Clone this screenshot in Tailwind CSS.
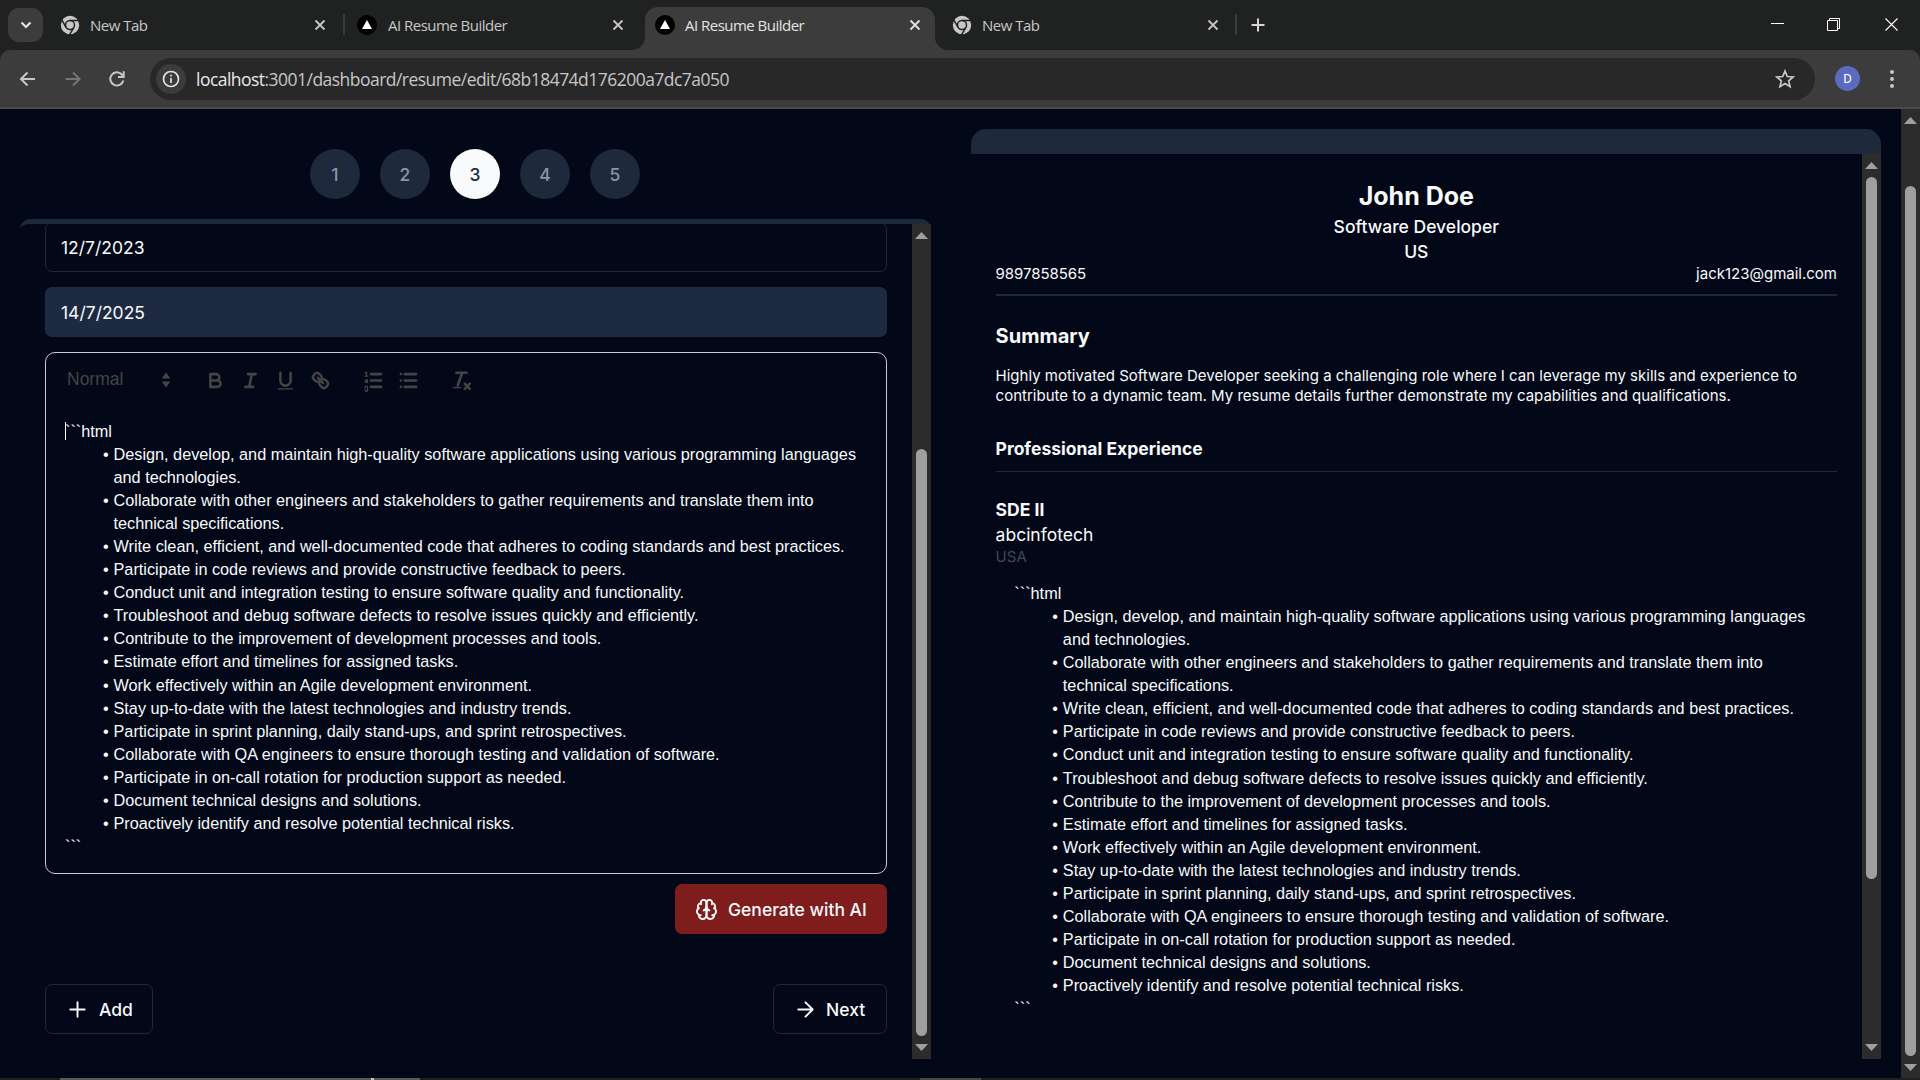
<!DOCTYPE html>
<html lang="en">
<head>
<meta charset="utf-8">
<title>AI Resume Builder</title>
<script src="https://cdn.jsdelivr.net/npm/@tailwindcss/browser@4"></script>
</head>
<body class="w-[1920px] h-[1080px] overflow-hidden bg-[#020817] font-[Inter,sans-serif] text-[#f8fafc] flex flex-col">

<svg class="hidden">
  <symbol id="x" viewBox="0 0 12 12"><path d="M1.5 1.5l9 9M10.5 1.5l-9 9" stroke="currentColor" stroke-width="1.8" fill="none"/></symbol>
  <symbol id="chrome" viewBox="-10 -10 20 20">
    <circle r="9.2" fill="#c7c7c7"/>
    <g stroke="#202221" stroke-width="1.5" fill="none"><circle r="4.5"/><path d="M0-4.5H9.5"/><path d="M0-4.5H9.5" transform="rotate(120)"/><path d="M0-4.5H9.5" transform="rotate(240)"/></g>
  </symbol>
  <symbol id="tri" viewBox="0 0 20 20"><circle cx="10" cy="10" r="10" fill="#000"/><path d="M10 5l5 9H5z" fill="#fff"/></symbol>
  <symbol id="up" viewBox="0 0 13 7"><path d="M6.5 0L13 7H0z" fill="#9f9f9f"/></symbol>
  <symbol id="down" viewBox="0 0 13 7"><path d="M6.5 7L13 0H0z" fill="#9f9f9f"/></symbol>
</svg>

<!-- Tab strip -->
<div class="h-[50px] shrink-0 bg-[#202221] flex items-start pl-2 font-['Open_Sans',sans-serif] text-[15px] tracking-[-0.52px] text-[#c7c7c7]">
  <div class="mt-2 w-[35px] h-[34px] rounded-[11px] bg-[#3c3c3c] flex items-center justify-center">
    <svg class="w-3 h-3" viewBox="0 0 12 12"><path d="M1.5 3.5L6 8l4.5-4.5" stroke="#e3e3e3" stroke-width="2.2" fill="none"/></svg>
  </div>
  <div class="w-[302px] h-[50px] flex items-center pl-[17px]">
    <svg class="w-5 h-5"><use href="#chrome"/></svg>
    <span class="ml-[10px] w-[224px]">New Tab</span>
    <svg class="w-3 h-3"><use href="#x"/></svg>
  </div>
  <div class="mt-[14px] w-0.5 h-[21px] -ml-0.5 bg-[#3c3c3c] rounded"></div>
  <div class="w-[300px] h-[50px] flex items-center pl-[12px]">
    <svg class="w-5 h-5"><use href="#tri"/></svg>
    <span class="ml-[11px] w-[224px]">AI Resume Builder</span>
    <svg class="w-3 h-3"><use href="#x"/></svg>
  </div>
  <div class="relative mt-[7px] w-[290px] h-[43px] bg-[#3c3c3c] rounded-t-[13px] flex items-center pl-[10px] pb-[7px] text-[#e3e3e3]">
    <svg class="absolute -left-[13px] bottom-0 w-[13px] h-[13px]" viewBox="0 0 13 13"><path d="M13 0v13H0A13 13 0 0 0 13 0z" fill="#3c3c3c"/></svg>
    <svg class="absolute -right-[13px] bottom-0 w-[13px] h-[13px]" viewBox="0 0 13 13"><path d="M0 0v13h13A13 13 0 0 1 0 0z" fill="#3c3c3c"/></svg>
    <svg class="w-5 h-5"><use href="#tri"/></svg>
    <span class="ml-[10px] w-[224px]">AI Resume Builder</span>
    <svg class="w-3 h-3"><use href="#x"/></svg>
  </div>
  <div class="w-[300px] h-[50px] flex items-center pl-[17px]">
    <svg class="w-5 h-5"><use href="#chrome"/></svg>
    <span class="ml-[10px] w-[225px]">New Tab</span>
    <svg class="w-3 h-3"><use href="#x"/></svg>
  </div>
  <div class="mt-[14px] w-0.5 h-[21px] bg-[#3c3c3c] rounded"></div>
  <svg class="mt-[18px] ml-[14px] w-[14px] h-[14px]" viewBox="0 0 14 14"><path d="M7 .5v13M.5 7h13" stroke="#d6d6d6" stroke-width="2"/></svg>
  <div class="ml-auto mr-[22px] mt-[18px] flex text-white">
    <svg class="w-[13px] h-[13px]" viewBox="0 0 13 13"><path d="M0 5.5h13" stroke="#fff"/></svg>
    <svg class="ml-[43px] w-[13px] h-[13px]" viewBox="0 0 13 13"><path d="M.5 2.5h10v10H.5zM2.5 2V.5h10v10H11" fill="none" stroke="#fff"/></svg>
    <svg class="ml-[45px] w-[13px] h-[13px]" viewBox="0 0 13 13"><path d="M.5.5l12 12M12.5.5l-12 12" stroke="#fff" stroke-width="1.1"/></svg>
  </div>
</div>

<!-- Toolbar -->
<div class="h-[59px] shrink-0 bg-[#202221]">
  <div class="h-[59px] bg-[#3c3c3c] rounded-t-[10px] border-b-2 border-[#4a4a4a] flex items-center pl-[18px]">
    <svg class="w-5 h-5" viewBox="0 0 20 20" fill="none" stroke="#c7c7c7" stroke-width="2"><path d="M17 10H3.500M9.500 3.500L3 10l6.500 6.500"/></svg>
    <svg class="ml-[25px] w-5 h-5" viewBox="0 0 20 20" fill="none" stroke="#757575" stroke-width="2"><path d="M2.500 10H16M10 3.500l6.500 6.500-6.500 6.500"/></svg>
    <svg class="ml-[24px] w-5 h-5" viewBox="0 0 20 20" fill="none" stroke="#c7c7c7" stroke-width="2"><path d="M16.300 11.500A6.600 6.600 0 1 1 14.800 5.500L16.500 7.300"/><path d="M16.700 2.300v5.700h-5.700"/></svg>
    <div class="ml-[23px] w-[1665px] h-[42px] rounded-full bg-[#282828] flex items-center pl-[6px] pr-[20px]">
      <div class="w-[30px] h-[30px] rounded-full bg-[#3c3c3c] flex items-center justify-center">
        <svg class="w-[18px] h-[18px]" viewBox="0 0 18 18"><circle cx="9" cy="9" r="7.5" fill="none" stroke="#e3e3e3" stroke-width="1.7"/><path d="M9 8v5M9 4.800v1.800" stroke="#e3e3e3" stroke-width="1.7"/></svg>
      </div>
      <span class="ml-[10px] pt-0.5 font-['Open_Sans',sans-serif] text-[17.5px] tracking-[-0.53px] text-[#c7c7c7] whitespace-nowrap"><span class="text-[#e8e8e8]">localhost</span>:3001/dashboard/resume/edit/68b18474d176200a7dc7a050</span>
      <svg class="ml-auto w-5 h-5" viewBox="0 0 20 20"><path d="M10 2l2.300 5.500 5.900.5-4.500 3.900 1.400 5.800L10 14.600l-5.100 3.100 1.400-5.800L1.800 8l5.900-.5z" fill="none" stroke="#c7c7c7" stroke-width="1.7"/></svg>
    </div>
    <div class="ml-[20px] w-[25px] h-[25px] rounded-full bg-[#5c6bc0] text-[13px] text-white flex items-center justify-center font-[Roboto,sans-serif]">D</div>
    <svg class="ml-[29px] w-[6px] h-5" viewBox="0 0 6 20" fill="#c7c7c7"><circle cx="3" cy="3" r="2"/><circle cx="3" cy="10" r="2"/><circle cx="3" cy="17" r="2"/></svg>
  </div>
</div>

<!-- Page -->
<div class="h-[969px] shrink-0 flex">
  <!-- Form column -->
  <section class="ml-5 w-[911px] pt-10">
    <div class="flex justify-center gap-5 text-[17.5px] font-medium text-[#8996a8] -ml-px">
      <div class="w-[50px] h-[50px] pt-0.5 rounded-full bg-[#1e293b] flex items-center justify-center">1</div>
      <div class="w-[50px] h-[50px] pt-0.5 rounded-full bg-[#1e293b] flex items-center justify-center">2</div>
      <div class="w-[50px] h-[50px] pt-0.5 rounded-full bg-[#f8fafc] text-[#1e293b] flex items-center justify-center">3</div>
      <div class="w-[50px] h-[50px] pt-0.5 rounded-full bg-[#1e293b] flex items-center justify-center">4</div>
      <div class="w-[50px] h-[50px] pt-0.5 rounded-full bg-[#1e293b] flex items-center justify-center">5</div>
    </div>
    <div class="mt-5 h-[840px] border-t-[5px] border-[#1e293b] rounded-t-[10px] flex">
      <div class="h-[835px] w-[892px] overflow-hidden pl-[25px] pr-[25px] flex flex-col">
        <div class="-mt-[2px] h-[50px] shrink-0 border border-[#1e293b] rounded-[7px] px-[15px] pt-0.5 flex items-center text-[17.5px]">12/7/2023</div>
        <div class="mt-[15px] h-[50px] shrink-0 rounded-[7px] bg-[#1e2a42] px-[16px] pt-0.5 flex items-center text-[17.5px]">14/7/2025</div>
        <!-- Rich text editor -->
        <div class="mt-[15px] h-[522px] shrink-0 border border-[#ccc] rounded-[10px] font-['Liberation_Sans',Arial,sans-serif]">
          <div class="h-[52px] pt-[2px] pl-[21px] flex items-center text-[#444]">
            <span class="w-[92px] text-[17.5px] font-medium -mt-px">Normal</span>
            <svg class="w-[14px] h-[22px]" viewBox="0 0 14 22" fill="#444"><path d="M7 4L10.500 9h-7zM7 18l3.500-5h-7z" stroke="#444" stroke-linejoin="round"/></svg>
            <svg class="ml-[31px] w-[23px] h-[23px]" viewBox="0 0 18 18" fill="none" stroke="#444" stroke-width="2" stroke-linecap="round" stroke-linejoin="round"><path d="M5 4h4.500A2.500 2.500 0 0 1 12 6.500 2.500 2.500 0 0 1 9.500 9H5zM5 9h5.500A2.500 2.500 0 0 1 13 11.500 2.500 2.500 0 0 1 10.500 14H5z"/></svg>
            <svg class="ml-[12px] w-[23px] h-[23px]" viewBox="0 0 18 18" fill="none" stroke="#444" stroke-width="2" stroke-linecap="round"><path d="M7 4h6M5 14h6M8 14l2-10"/></svg>
            <svg class="ml-[12px] w-[23px] h-[23px]" viewBox="0 0 18 18" fill="none" stroke="#444" stroke-width="2" stroke-linecap="round"><path d="M5 3v6a4.012 4.012 0 0 0 4 4 4.012 4.012 0 0 0 4-4V3"/><rect x="3" y="15" width="12" height="1" rx=".5" fill="#444" stroke="none"/></svg>
            <svg class="ml-[12px] w-[23px] h-[23px]" viewBox="0 0 18 18" fill="none" stroke="#444" stroke-width="2" stroke-linecap="round"><path d="M7 7l4 4M8.900 4.577a3.476 3.476 0 0 1 .36 4.679 3.476 3.476 0 0 1-4.679-.36C3.185 7.500 2.035 6.400 4.217 4.217s3.286-1.032 4.683.36zM13.423 9.100a3.476 3.476 0 0 0-4.679-.36 3.476 3.476 0 0 0 .36 4.679c1.392 1.392 2.500 2.542 4.679.36s1.032-3.286-.36-4.679z"/></svg>
            <svg class="ml-[30px] w-[23px] h-[23px]" viewBox="0 0 18 18" fill="none" stroke="#444" stroke-linecap="round"><path stroke-width="2" d="M7 4h8M7 9h8M7 14h8"/><path d="M2.500 5.500h2M3.500 5.500v-3l-1 .5M2.500 10.500h2c0-.7-1.900-.6-1.900-1.500s1.900-.9 1.900 0c0 .5-.8 1-1.500 1.300M2.500 14.700a1 1 0 1 1 1.200.8 1 1 0 1 1-1.200.8"/></svg>
            <svg class="ml-[12px] w-[23px] h-[23px]" viewBox="0 0 18 18" fill="none" stroke="#444" stroke-width="2" stroke-linecap="round"><path d="M6 4h9M6 9h9M6 14h9M3 4h0M3 9h0M3 14h0"/></svg>
            <svg class="ml-[30px] w-[23px] h-[23px]" viewBox="0 0 18 18" fill="none" stroke="#444" stroke-linecap="round"><path stroke-width="2" d="M5 3h8M6 13L9.500 3M11.500 11.500l4 4M15.500 11.500l-4 4"/><rect x="2" y="14" width="7" height="1" rx=".5" fill="#444" stroke="none"/></svg>
          </div>
          <div class="relative pt-[14.7px] pl-[19px] pr-[19px] text-[16.25px] leading-[23.075px]">
            <div class="absolute left-[19px] top-[17px] w-px h-[18px] bg-white"></div>
            <p>```html</p>
            <ul class="pl-[24px]">
              <li class="pl-[24.5px]"><span class="inline-block w-[19.5px] -ml-[24.4px] mr-[4.9px] text-right">•</span>Design, develop, and maintain high-quality software applications using various programming languages and technologies.</li>
              <li class="pl-[24.5px]"><span class="inline-block w-[19.5px] -ml-[24.4px] mr-[4.9px] text-right">•</span>Collaborate with other engineers and stakeholders to gather requirements and translate them into technical specifications.</li>
              <li class="pl-[24.5px]"><span class="inline-block w-[19.5px] -ml-[24.4px] mr-[4.9px] text-right">•</span>Write clean, efficient, and well-documented code that adheres to coding standards and best practices.</li>
              <li class="pl-[24.5px]"><span class="inline-block w-[19.5px] -ml-[24.4px] mr-[4.9px] text-right">•</span>Participate in code reviews and provide constructive feedback to peers.</li>
              <li class="pl-[24.5px]"><span class="inline-block w-[19.5px] -ml-[24.4px] mr-[4.9px] text-right">•</span>Conduct unit and integration testing to ensure software quality and functionality.</li>
              <li class="pl-[24.5px]"><span class="inline-block w-[19.5px] -ml-[24.4px] mr-[4.9px] text-right">•</span>Troubleshoot and debug software defects to resolve issues quickly and efficiently.</li>
              <li class="pl-[24.5px]"><span class="inline-block w-[19.5px] -ml-[24.4px] mr-[4.9px] text-right">•</span>Contribute to the improvement of development processes and tools.</li>
              <li class="pl-[24.5px]"><span class="inline-block w-[19.5px] -ml-[24.4px] mr-[4.9px] text-right">•</span>Estimate effort and timelines for assigned tasks.</li>
              <li class="pl-[24.5px]"><span class="inline-block w-[19.5px] -ml-[24.4px] mr-[4.9px] text-right">•</span>Work effectively within an Agile development environment.</li>
              <li class="pl-[24.5px]"><span class="inline-block w-[19.5px] -ml-[24.4px] mr-[4.9px] text-right">•</span>Stay up-to-date with the latest technologies and industry trends.</li>
              <li class="pl-[24.5px]"><span class="inline-block w-[19.5px] -ml-[24.4px] mr-[4.9px] text-right">•</span>Participate in sprint planning, daily stand-ups, and sprint retrospectives.</li>
              <li class="pl-[24.5px]"><span class="inline-block w-[19.5px] -ml-[24.4px] mr-[4.9px] text-right">•</span>Collaborate with QA engineers to ensure thorough testing and validation of software.</li>
              <li class="pl-[24.5px]"><span class="inline-block w-[19.5px] -ml-[24.4px] mr-[4.9px] text-right">•</span>Participate in on-call rotation for production support as needed.</li>
              <li class="pl-[24.5px]"><span class="inline-block w-[19.5px] -ml-[24.4px] mr-[4.9px] text-right">•</span>Document technical designs and solutions.</li>
              <li class="pl-[24.5px]"><span class="inline-block w-[19.5px] -ml-[24.4px] mr-[4.9px] text-right">•</span>Proactively identify and resolve potential technical risks.</li>
            </ul>
            <p>```</p>
          </div>
        </div>
        <button class="self-end mt-[10px] w-[212px] h-[50px] shrink-0 rounded-[7px] bg-[#7f1d1d] flex items-center pl-5 text-[17.5px] font-medium whitespace-nowrap">
          <svg class="w-[23px] h-[23px] mr-[10px]" viewBox="0 0 24 24" fill="none" stroke="currentColor" stroke-width="2" stroke-linecap="round" stroke-linejoin="round"><path d="M12 5a3 3 0 1 0-5.997.125 4 4 0 0 0-2.526 5.770 4 4 0 0 0 .556 6.588A4 4 0 1 0 12 18Z"/><path d="M12 5a3 3 0 1 1 5.997.125 4 4 0 0 1 2.526 5.770 4 4 0 0 1-.556 6.588A4 4 0 1 1 12 18Z"/><path d="M15 13a4.500 4.500 0 0 1-3-4 4.500 4.500 0 0 1-3 4M17.599 6.500a3 3 0 0 0 .399-1.375M6.003 5.125A3 3 0 0 0 6.401 6.500M3.477 10.896a4 4 0 0 1 .585-.396M19.938 10.500a4 4 0 0 1 .585.396M6 18a4 4 0 0 1-1.967-.516M19.967 17.484A4 4 0 0 1 18 18"/></svg>
          <span class="pt-0.5">Generate with AI</span>
        </button>
        <div class="mt-[50px] flex justify-between text-[17.5px] font-medium">
          <button class="w-[108px] h-[50px] rounded-[7px] border border-[#1e293b] flex items-center pl-[20px]">
            <svg class="w-[23px] h-[23px] mr-[10px]" viewBox="0 0 24 24" fill="none" stroke="currentColor" stroke-width="2" stroke-linecap="round"><path d="M4.500 12h15M12 4.500v15"/></svg><span class="pt-0.5">Add</span>
          </button>
          <button class="w-[114px] h-[50px] rounded-[7px] border border-[#1e293b] flex items-center pl-[20px]">
            <svg class="w-[23px] h-[23px] mr-[9px]" viewBox="0 0 24 24" fill="none" stroke="currentColor" stroke-width="2" stroke-linecap="round" stroke-linejoin="round"><path d="M4.500 12h15M12 4.500l7.500 7.500-7.500 7.500"/></svg><span class="pt-0.5">Next</span>
          </button>
        </div>
      </div>
      <div class="w-[19px] h-[835px] bg-[#2c2c2c] flex flex-col items-center pt-2 pb-2">
        <svg class="w-[13px] h-[7px]"><use href="#up"/></svg>
        <div class="mt-[210px] w-[11px] h-[587px] rounded-full bg-[#9f9f9f]"></div>
        <svg class="mt-auto w-[13px] h-[7px]"><use href="#down"/></svg>
      </div>
    </div>
  </section>

  <!-- Resume preview -->
  <section class="ml-10 mt-5 w-[910px] h-[930px] border-t-[25px] border-[#1e293b] rounded-t-[15px] flex">
    <div class="w-[891px] pl-[24.6px] pr-[25px] pt-[25px]">
      <h1 class="text-center text-[25px] leading-[35px] font-bold">John Doe</h1>
      <p class="text-center text-[17.5px] leading-[25px] font-medium">Software Developer</p>
      <p class="text-center text-[17.5px] leading-[25px] font-medium">US</p>
      <div class="flex justify-between text-[15px] leading-5"><span class="tracking-[-0.05px]">9897858565</span><span>jack123@gmail.com</span></div>
      <div class="mt-[10px] h-0.5 bg-[#1e293b]"></div>
      <h2 class="mt-[25px] text-[20px] leading-[30px] font-bold">Summary</h2>
      <p class="mt-[15px] text-[15px] leading-5">Highly motivated Software Developer seeking a challenging role where I can leverage my skills and experience to contribute to a dynamic team. My resume details further demonstrate my capabilities and qualifications.</p>
      <h2 class="mt-[30px] text-[17.5px] leading-[25px] font-bold">Professional Experience</h2>
      <div class="mt-[10px] h-px bg-[#1e293b]"></div>
      <h3 class="mt-[25px] text-[17.5px] leading-[25px] font-bold">SDE II</h3>
      <p class="text-[17.5px] leading-[25px]">abcinfotech</p>
      <p class="text-[15px] leading-5 text-[#404956]">USA</p>
      <div class="pt-[14.9px] pl-[18.75px] pr-[18.75px] font-['Liberation_Sans',Arial,sans-serif] text-[16.25px] leading-[23.075px]">
        <p>```html</p>
        <ul class="pl-[24px]">
          <li class="pl-[24.5px]"><span class="inline-block w-[19.5px] -ml-[24.4px] mr-[4.9px] text-right">•</span>Design, develop, and maintain high-quality software applications using various programming languages and technologies.</li>
          <li class="pl-[24.5px]"><span class="inline-block w-[19.5px] -ml-[24.4px] mr-[4.9px] text-right">•</span>Collaborate with other engineers and stakeholders to gather requirements and translate them into technical specifications.</li>
          <li class="pl-[24.5px]"><span class="inline-block w-[19.5px] -ml-[24.4px] mr-[4.9px] text-right">•</span>Write clean, efficient, and well-documented code that adheres to coding standards and best practices.</li>
          <li class="pl-[24.5px]"><span class="inline-block w-[19.5px] -ml-[24.4px] mr-[4.9px] text-right">•</span>Participate in code reviews and provide constructive feedback to peers.</li>
          <li class="pl-[24.5px]"><span class="inline-block w-[19.5px] -ml-[24.4px] mr-[4.9px] text-right">•</span>Conduct unit and integration testing to ensure software quality and functionality.</li>
          <li class="pl-[24.5px]"><span class="inline-block w-[19.5px] -ml-[24.4px] mr-[4.9px] text-right">•</span>Troubleshoot and debug software defects to resolve issues quickly and efficiently.</li>
          <li class="pl-[24.5px]"><span class="inline-block w-[19.5px] -ml-[24.4px] mr-[4.9px] text-right">•</span>Contribute to the improvement of development processes and tools.</li>
          <li class="pl-[24.5px]"><span class="inline-block w-[19.5px] -ml-[24.4px] mr-[4.9px] text-right">•</span>Estimate effort and timelines for assigned tasks.</li>
          <li class="pl-[24.5px]"><span class="inline-block w-[19.5px] -ml-[24.4px] mr-[4.9px] text-right">•</span>Work effectively within an Agile development environment.</li>
          <li class="pl-[24.5px]"><span class="inline-block w-[19.5px] -ml-[24.4px] mr-[4.9px] text-right">•</span>Stay up-to-date with the latest technologies and industry trends.</li>
          <li class="pl-[24.5px]"><span class="inline-block w-[19.5px] -ml-[24.4px] mr-[4.9px] text-right">•</span>Participate in sprint planning, daily stand-ups, and sprint retrospectives.</li>
          <li class="pl-[24.5px]"><span class="inline-block w-[19.5px] -ml-[24.4px] mr-[4.9px] text-right">•</span>Collaborate with QA engineers to ensure thorough testing and validation of software.</li>
          <li class="pl-[24.5px]"><span class="inline-block w-[19.5px] -ml-[24.4px] mr-[4.9px] text-right">•</span>Participate in on-call rotation for production support as needed.</li>
          <li class="pl-[24.5px]"><span class="inline-block w-[19.5px] -ml-[24.4px] mr-[4.9px] text-right">•</span>Document technical designs and solutions.</li>
          <li class="pl-[24.5px]"><span class="inline-block w-[19.5px] -ml-[24.4px] mr-[4.9px] text-right">•</span>Proactively identify and resolve potential technical risks.</li>
        </ul>
        <p>```</p>
      </div>
    </div>
    <div class="w-[19px] h-[905px] bg-[#2c2c2c] flex flex-col items-center pt-2 pb-2">
      <svg class="w-[13px] h-[7px]"><use href="#up"/></svg>
      <div class="mt-[8px] w-[11px] h-[702px] rounded-full bg-[#9f9f9f]"></div>
      <svg class="mt-auto w-[13px] h-[7px]"><use href="#down"/></svg>
    </div>
  </section>

  <!-- Window scrollbar -->
  <div class="ml-auto w-[19px] h-[969px] bg-[#2c2c2c] flex flex-col items-center pt-2 pb-[7px]">
    <svg class="w-[13px] h-[7px]"><use href="#up"/></svg>
    <div class="mt-[62px] w-[11px] h-[870px] rounded-full bg-[#9f9f9f]"></div>
    <svg class="mt-auto w-[13px] h-[7px]"><use href="#down"/></svg>
  </div>
</div>

<!-- Taskbar edge -->
<div class="h-0.5 shrink-0 bg-[#1f1f22] flex">
  <div class="ml-[60px] w-[360px] bg-[#58585a] pl-[311px]"><div class="w-[3px] h-0.5 bg-[#c8c8c8]"></div></div>
  <div class="ml-[500px] w-[61px] bg-[#48484a]"></div>
</div>
</body>
</html>
